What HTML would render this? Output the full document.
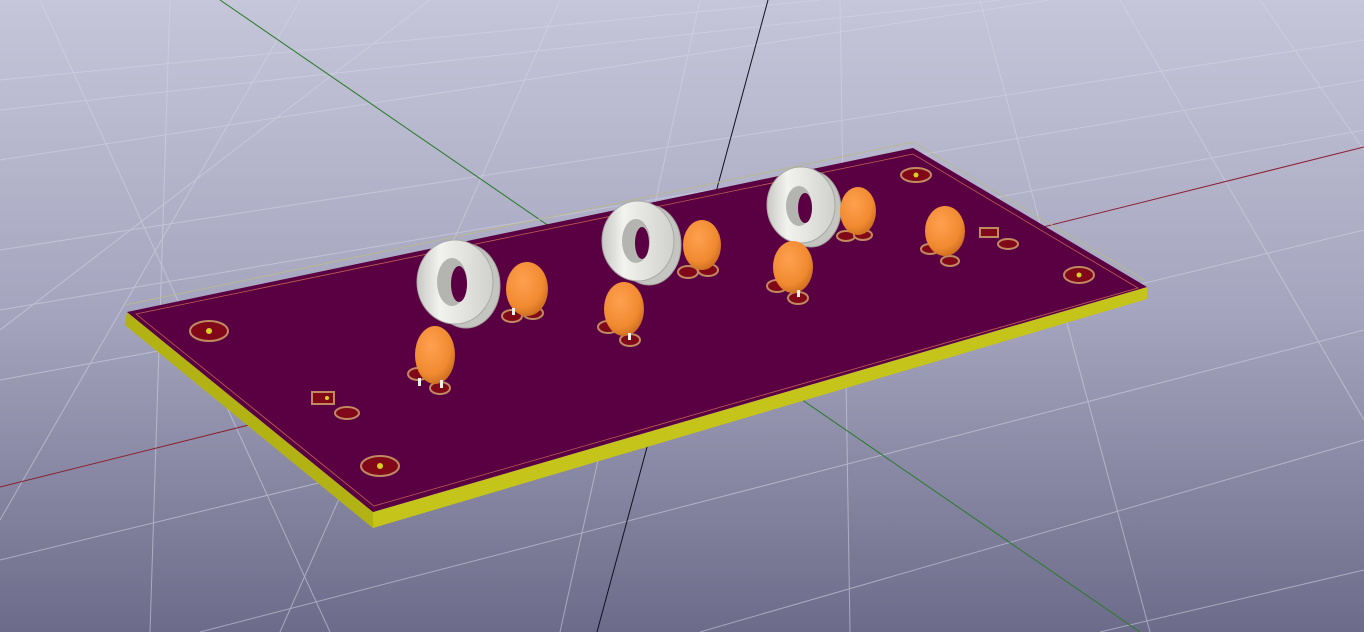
<!DOCTYPE html>
<html><head><style>html,body{margin:0;padding:0;width:1364px;height:632px;overflow:hidden}</style></head><body>
<svg width="1364" height="632" viewBox="0 0 1364 632" xmlns="http://www.w3.org/2000/svg">
<defs>
<linearGradient id="bg" x1="0" y1="0" x2="0" y2="1"><stop offset="0" stop-color="#c6c6da"/><stop offset="0.5" stop-color="#a4a4be"/><stop offset="1" stop-color="#6c6c8a"/></linearGradient>
<radialGradient id="or" cx="0.4" cy="0.35" r="0.7"><stop offset="0" stop-color="#ffa050"/><stop offset="0.7" stop-color="#f08a30"/><stop offset="1" stop-color="#c86a20"/></radialGradient>
<linearGradient id="tor" x1="0" y1="0" x2="1" y2="0"><stop offset="0" stop-color="#c8c8c4"/><stop offset="0.3" stop-color="#f2f2ee"/><stop offset="1" stop-color="#d0d0cc"/></linearGradient>
</defs>
<rect width="1364" height="632" fill="url(#bg)"/>
<g stroke="#d6d6e6" stroke-width="1" opacity="0.55" fill="none">
<path d="M0 80 L820 0 M0 160 L1050 0 M0 250 L1364 40 M0 380 L1364 130 M0 560 L1364 230 M200 632 L1364 330 M700 632 L1364 440 M1100 632 L1364 570 M0 110 L1000 0 M0 310 L1364 80"/>
<path d="M40 0 L330 632 M170 0 L150 632 M300 0 L0 520 M430 0 L0 330 M560 0 L280 632 M700 0 L560 632 M840 0 L850 632 M980 0 L1150 632 M1120 0 L1364 420 M1260 0 L1364 150"/>
</g>
<line x1="0" y1="487" x2="1364" y2="147" stroke="#8a2030" stroke-width="1"/>
<line x1="220" y1="0" x2="1140" y2="632" stroke="#2a7a2a" stroke-width="1"/>
<line x1="768" y1="0" x2="597" y2="632" stroke="#101020" stroke-width="1"/>
<polygon points="127,312 373,512 1147,287 1147,299 373,528 125,325" fill="#c4c41a"/>
<polygon points="127,312 373,512 373,528 125,325" fill="#b2b214"/>
<polygon points="127,312 913,148 1147,287 373,512" fill="#5a0042"/>
<polyline points="125,305 913,142 1146,281" fill="none" stroke="#b8b890" stroke-width="1"/>
<polygon points="136,314 913,154 1138,288 374,506" fill="none" stroke="#c06050" stroke-width="0.8"/>
<g fill="#800818" stroke="#c08a60" stroke-width="2">
<ellipse cx="209" cy="331" rx="19" ry="10"/><ellipse cx="380" cy="466" rx="19" ry="10"/>
<ellipse cx="916" cy="175" rx="15" ry="7"/><ellipse cx="1079" cy="275" rx="15" ry="8"/>
<rect x="312" y="392" width="22" height="12"/><ellipse cx="347" cy="413" rx="12" ry="6"/>
<rect x="980" y="228" width="18" height="9"/><ellipse cx="1008" cy="244" rx="10" ry="5"/>
</g>
<g fill="#d8d020"><circle cx="209" cy="331" r="3"/><circle cx="380" cy="466" r="3"/><circle cx="916" cy="175" r="2.5"/><circle cx="1079" cy="275" r="2.5"/><circle cx="327" cy="398" r="2"/></g>
<g fill="#800818" stroke="#c08a60" stroke-width="2">
<ellipse cx="418" cy="374" rx="10" ry="6"/><ellipse cx="440" cy="388" rx="10" ry="6"/>
<ellipse cx="512" cy="316" rx="10" ry="6"/><ellipse cx="533" cy="313" rx="10" ry="6"/>
<ellipse cx="608" cy="327" rx="10" ry="6"/><ellipse cx="630" cy="340" rx="10" ry="6"/>
<ellipse cx="688" cy="272" rx="10" ry="6"/><ellipse cx="708" cy="270" rx="10" ry="6"/>
<ellipse cx="777" cy="286" rx="10" ry="6"/><ellipse cx="798" cy="298" rx="10" ry="6"/>
<ellipse cx="846" cy="236" rx="9" ry="5"/><ellipse cx="863" cy="235" rx="9" ry="5"/>
<ellipse cx="930" cy="249" rx="9" ry="5"/><ellipse cx="950" cy="261" rx="9" ry="5"/>
</g>
<g fill="#c4c4c0" stroke="#a0a09c" stroke-width="1">
<ellipse cx="466" cy="286" rx="34" ry="42"/>
<ellipse cx="649" cy="245" rx="32" ry="40"/>
<ellipse cx="811" cy="209" rx="30" ry="38"/>
</g>
<g fill="url(#tor)" stroke="#a8a8a4" stroke-width="1">
<ellipse cx="455" cy="282" rx="38" ry="42"/>
<ellipse cx="638" cy="241" rx="36" ry="40"/>
<ellipse cx="801" cy="205" rx="34" ry="38"/>
</g>
<g fill="#b4b4b0"><ellipse cx="452" cy="282" rx="15" ry="24"/><ellipse cx="636" cy="241" rx="14" ry="22"/><ellipse cx="799" cy="206" rx="13" ry="20"/></g>
<g fill="#5a0042"><ellipse cx="459" cy="284" rx="8" ry="18"/><ellipse cx="642" cy="243" rx="7" ry="16"/><ellipse cx="805" cy="208" rx="7" ry="15"/></g>
<g fill="url(#or)">
<ellipse cx="527" cy="289" rx="21" ry="27"/><ellipse cx="435" cy="355" rx="20" ry="29"/>
<ellipse cx="702" cy="245" rx="19" ry="25"/><ellipse cx="624" cy="309" rx="20" ry="27"/>
<ellipse cx="858" cy="211" rx="18" ry="24"/><ellipse cx="793" cy="267" rx="20" ry="26"/>
<ellipse cx="945" cy="231" rx="20" ry="25"/>
</g>
<g fill="#eeeeea"><rect x="418" y="378" width="3" height="8"/><rect x="440" y="380" width="3" height="8"/><rect x="628" y="333" width="3" height="7"/><rect x="797" y="290" width="3" height="7"/><rect x="512" y="308" width="3" height="7"/></g>
</svg>
</body></html>
